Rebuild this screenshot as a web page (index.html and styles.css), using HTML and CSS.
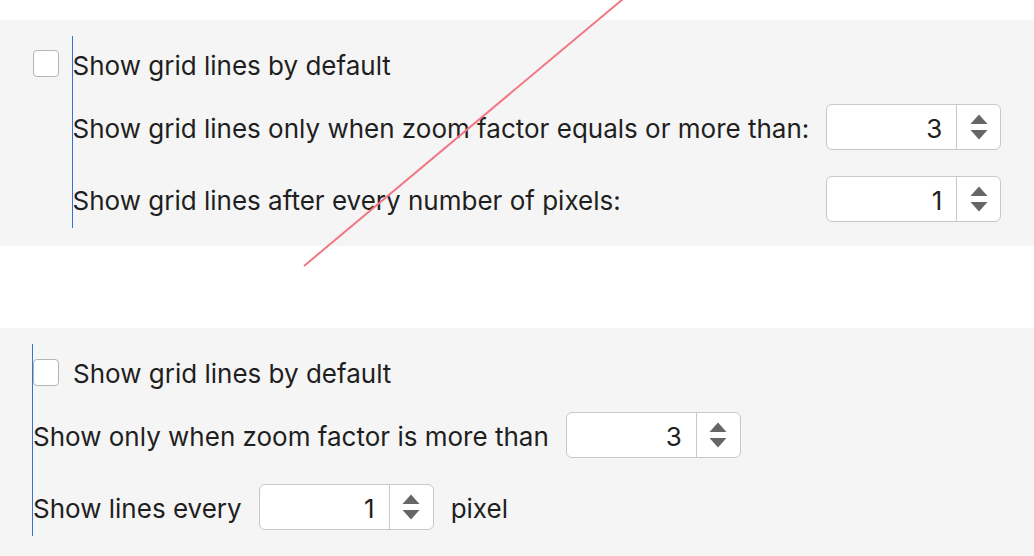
FILE: index.html
```html
<!DOCTYPE html>
<html>
<head>
<meta charset="utf-8">
<link rel="stylesheet" href="styles.css">
</head>
<body>
<main class="page">
  <section class="panel panel-a">
    <span class="checkbox"></span>
    <div class="guide">
      <div class="row">
        <span class="label">Show grid lines by default</span>
      </div>
      <div class="row row-2 spread">
        <span class="label">Show grid lines only when zoom factor equals or more than:</span>
        <div class="spinner">
          <span class="value">3</span>
          <span class="arrows"><svg width="18" height="26" viewBox="0 0 18 26"><path d="M9 0.5 L17.5 10 L0.5 10 Z" /><path d="M0.5 16 L17.5 16 L9 25.5 Z" /></svg></span>
        </div>
      </div>
      <div class="row row-3 spread">
        <span class="label">Show grid lines after every number of pixels:</span>
        <div class="spinner">
          <span class="value">1</span>
          <span class="arrows"><svg width="18" height="26" viewBox="0 0 18 26"><path d="M9 0.5 L17.5 10 L0.5 10 Z" /><path d="M0.5 16 L17.5 16 L9 25.5 Z" /></svg></span>
        </div>
      </div>
    </div>
  </section>

  <section class="panel panel-b">
    <div class="guide">
      <div class="row">
        <span class="checkbox"></span>
        <span class="label check-label">Show grid lines by default</span>
      </div>
      <div class="row row-2">
        <span class="label">Show only when zoom factor is more than</span>
        <div class="spinner">
          <span class="value">3</span>
          <span class="arrows"><svg width="18" height="26" viewBox="0 0 18 26"><path d="M9 0.5 L17.5 10 L0.5 10 Z" /><path d="M0.5 16 L17.5 16 L9 25.5 Z" /></svg></span>
        </div>
      </div>
      <div class="row row-3">
        <span class="label">Show lines every</span>
        <div class="spinner">
          <span class="value">1</span>
          <span class="arrows"><svg width="18" height="26" viewBox="0 0 18 26"><path d="M9 0.5 L17.5 10 L0.5 10 Z" /><path d="M0.5 16 L17.5 16 L9 25.5 Z" /></svg></span>
        </div>
        <span class="label">pixel</span>
      </div>
    </div>
  </section>

  <svg class="overlay" width="1034" height="556" viewBox="0 0 1034 556">
    <line x1="623" y1="-1" x2="304" y2="266" />
  </svg>
</main>
</body>
</html>
```

FILE: styles.css
```css
* {
  box-sizing: border-box;
}

html, body {
  margin: 0;
  padding: 0;
  background: #ffffff;
}

body {
  font-family: Inter, "Noto Sans", "Liberation Sans", sans-serif;
  font-size: 26px;
  color: #1f1f1f;
  width: 1034px;
  height: 556px;
  overflow: hidden;
}

.page {
  position: relative;
  padding-top: 20px;
  height: 556px;
}

.panel {
  background: #f5f5f5;
}

.panel-a {
  display: flex;
  align-items: flex-start;
  padding: 16px 34px 18px 33px;
}

.panel-b {
  margin-top: 82px;
  padding: 16px 33px 30px 32px;
}

.guide {
  border-left: 1.5px solid #3574d4;
  padding: 5px 0 6px 0;
  display: flex;
  flex-direction: column;
}

.panel-a .guide {
  flex: 1;
  margin-left: 12.5px;
}

.row {
  height: 46px;
  display: flex;
  align-items: center;
  gap: 17px;
}

.row-2 {
  margin-top: 17px;
}

.row-3 {
  margin-top: 26px;
}

.spread {
  justify-content: space-between;
}

.label {
  white-space: nowrap;
  line-height: 1;
  padding-top: 3px;
}

.checkbox {
  display: block;
  flex: none;
  width: 26px;
  height: 27px;
  background: #ffffff;
  border: 1.5px solid #b5b5b5;
  border-radius: 4px;
}

.panel-a .checkbox {
  margin-top: 14px;
}

.row .check-label {
  margin-left: -3px;
}

.spinner {
  flex: none;
  width: 175px;
  height: 46px;
  display: flex;
  background: #ffffff;
  border: 1.5px solid #c8c8c8;
  border-radius: 6px;
}

.spinner .value {
  flex: 1;
  display: flex;
  align-items: center;
  justify-content: flex-end;
  padding-right: 14px;
  padding-top: 2px;
  color: #1f1f1f;
}

.spinner .arrows {
  width: 44px;
  border-left: 1.5px solid #c8c8c8;
  display: flex;
  align-items: center;
  justify-content: center;
}

.arrows svg {
  display: block;
  fill: #666666;
}

.overlay {
  position: absolute;
  left: 0;
  top: 0;
  pointer-events: none;
}

.overlay line {
  stroke: #f27785;
  stroke-width: 2;
}
```
